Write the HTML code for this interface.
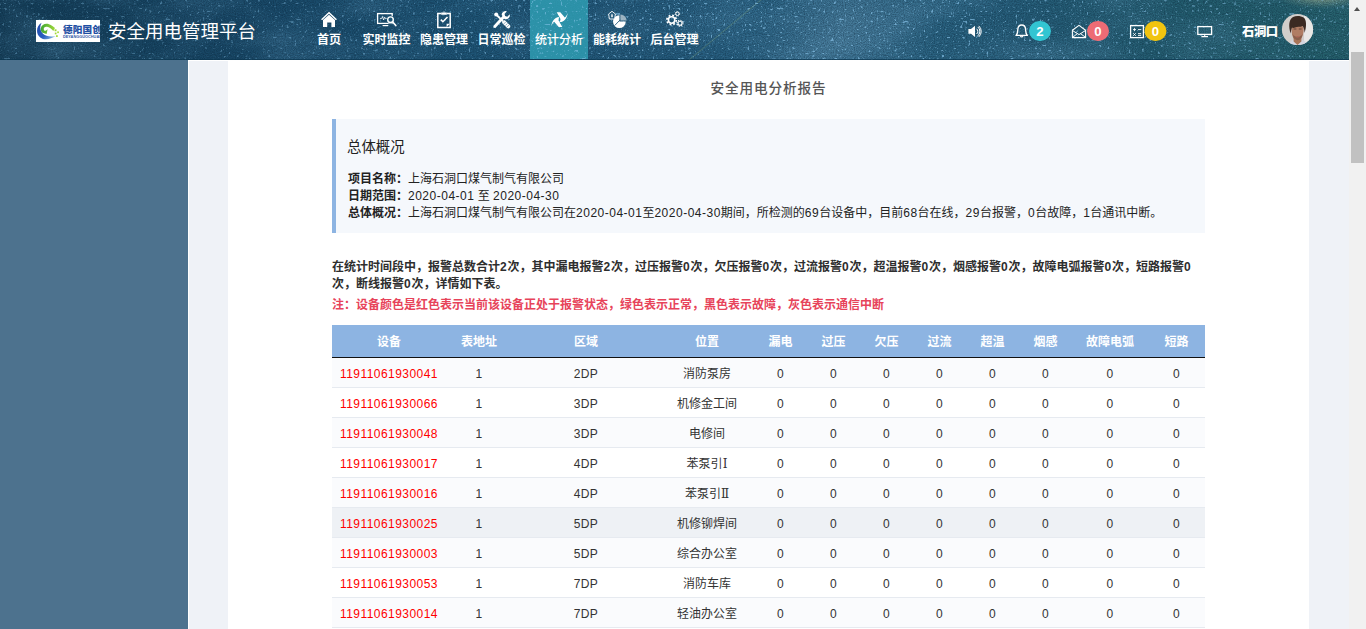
<!DOCTYPE html>
<html lang="zh-CN">
<head>
<meta charset="utf-8">
<title>安全用电管理平台</title>
<style>
*{box-sizing:border-box;margin:0;padding:0}
html,body{width:1366px;height:629px;overflow:hidden;background:#fff}
body{font-family:"Liberation Sans","Noto Sans CJK SC",sans-serif;font-size:12px;color:#222;position:relative}
#hdr{position:absolute;left:0;top:0;width:1349px;height:60px;overflow:hidden;
 background:linear-gradient(90deg,#17455f 0%,#1a4c66 30%,#245c74 55%,#2a6579 75%,#2f6a7c 100%);color:#fff}
#hdr svg.bg{position:absolute;left:0;top:0}
#logo{position:absolute;left:36px;top:20px;width:64px;height:22px;background:#fff;overflow:hidden}
#ttl{position:absolute;left:108px;top:18px;font-size:18.5px;line-height:28px;white-space:nowrap;color:#fff}
.nav{position:absolute;top:0;height:60px;width:58px;text-align:center}
.nav.act span{font-weight:500}
#hdr svg.ic{position:absolute;left:0;top:0}
.nav span{position:absolute;left:-10px;right:-10px;top:32px;font-size:12px;line-height:16px;white-space:nowrap;font-weight:bold}
.nav svg{position:absolute;left:50%;top:10px;margin-left:-10px}
#side{position:absolute;left:0;top:60px;width:188px;height:569px;background:#4d728e}
#main{position:absolute;left:189px;top:61px;width:1160px;height:568px;background:#eff2f7}
#card{position:absolute;left:39px;top:-1px;width:1081px;height:569px;background:#fff}
#sb{position:absolute;left:1349px;top:0;width:17px;height:629px;background:#f1f1f1}
#sb i{position:absolute;left:2px;top:52px;width:13px;height:111px;background:#c1c1c1}
#sb b{position:absolute;left:5px;top:7px;width:0;height:0;border-left:3.5px solid transparent;border-right:3.5px solid transparent;border-bottom:4px solid #505050}
h1{position:absolute;left:0;width:1081px;top:19px;text-align:center;font-size:13.6px;letter-spacing:.9px;line-height:20px;color:#555;font-weight:500}
#sum{position:absolute;left:104px;top:59px;width:873px;height:114px;background:#f5f8fc;border-left:4px solid #8db4e2}
#sum h2{position:absolute;left:11px;top:18px;font-size:14.4px;font-weight:normal;line-height:20px;color:#222}
#sum p{position:absolute;left:12px;font-size:12px;line-height:17px;white-space:nowrap;color:#222}
#para{position:absolute;left:104px;top:199px;width:873px;font-size:12px;line-height:16.5px;font-weight:bold;color:#2e2e2e}
#note{position:absolute;left:104px;top:237px;font-size:12px;line-height:17px;color:#e7435a;font-weight:bold;white-space:nowrap}
table{position:absolute;left:104px;top:265px;width:873px;border-collapse:separate;border-spacing:0;table-layout:fixed}
th{padding-bottom:2px;height:33px;background:#8db4e2;color:#fff;font-size:12px;font-weight:bold;text-align:center;border-bottom:1px solid #111}
td{height:30px;text-align:center;font-size:12px;color:#333;border-bottom:1px solid #e6eaf0;background:#fafbfd}
tr:nth-child(odd) td{background:#fff}
tr.hv td,tr.hv:nth-child(odd) td{background:#eef1f5}
.ro{font-family:"DejaVu Serif",serif;font-style:normal;font-size:12px;line-height:12px}
td{padding-top:3px}
td:nth-child(4){padding-top:0;padding-bottom:1px;letter-spacing:0}
td{letter-spacing:.35px}
td.r{color:#f00;letter-spacing:.45px}
.n{letter-spacing:.5px}
#para .n{letter-spacing:.8px}
</style>
</head>
<body>
<div id="hdr">
 <svg class="bg" width="1349" height="60" viewBox="0 0 1349 60">
  <defs>
   <filter id="stars" x="0" y="0" width="100%" height="100%" color-interpolation-filters="sRGB">
    <feTurbulence type="fractalNoise" baseFrequency="0.38" numOctaves="1" seed="2"/>
    <feColorMatrix type="matrix" values="0 0 0 0 0.55  0 0 0 0 0.78  0 0 0 0 0.93  6 6 0 0 -7.3"/>
    <feGaussianBlur stdDeviation="0.65"/>
   </filter>
   <filter id="stars2" x="0" y="0" width="100%" height="100%" color-interpolation-filters="sRGB">
    <feTurbulence type="fractalNoise" baseFrequency="0.55" numOctaves="1" seed="7"/>
    <feColorMatrix type="matrix" values="0 0 0 0 0.55  0 0 0 0 0.78  0 0 0 0 0.92  4 4 0 0 -4.8"/>
    <feGaussianBlur stdDeviation="0.5"/>
   </filter>
   <filter id="cloud" x="0" y="0" width="100%" height="100%" color-interpolation-filters="sRGB">
    <feTurbulence type="fractalNoise" baseFrequency="0.012 0.03" numOctaves="3" seed="3" result="t"/>
    <feColorMatrix in="t" type="matrix" values="0 0 0 0 0.45  0 0 0 0 0.68  0 0 0 0 0.82  1.6 0 0 0 -0.66"/>
   </filter>
   <filter id="grain" x="0" y="0" width="100%" height="100%" color-interpolation-filters="sRGB">
    <feTurbulence type="fractalNoise" baseFrequency="0.9" numOctaves="1" seed="11" result="t"/>
    <feColorMatrix in="t" type="matrix" values="0 0 0 0 0.03  0 0 0 0 0.12  0 0 0 0 0.2  1.5 0 0 0 -0.55"/>
   </filter>
   <linearGradient id="hg" x1="0" y1="0" x2="1" y2="0">
    <stop offset="0" stop-color="#143d57"/>
    <stop offset="0.2" stop-color="#194968"/>
    <stop offset="0.35" stop-color="#1e5475"/>
    <stop offset="0.5" stop-color="#255b7c"/>
    <stop offset="0.63" stop-color="#2d6686"/>
    <stop offset="0.75" stop-color="#255c78"/>
    <stop offset="0.88" stop-color="#235c6e"/>
    <stop offset="1" stop-color="#25606b"/>
   </linearGradient>
   <linearGradient id="smg" x1="0" y1="0" x2="1" y2="0"><stop offset="0" stop-color="#fff" stop-opacity=".5"/><stop offset=".25" stop-color="#fff" stop-opacity=".6"/><stop offset=".5" stop-color="#fff" stop-opacity=".95"/><stop offset=".7" stop-color="#fff" stop-opacity="1"/><stop offset="1" stop-color="#fff" stop-opacity=".65"/></linearGradient>
   <mask id="sm" maskUnits="userSpaceOnUse" x="0" y="0" width="1349" height="60"><rect width="1349" height="60" fill="url(#smg)"/></mask>
   <radialGradient id="mw" cx="0.5" cy="0.5" r="0.5"><stop offset="0" stop-color="#5a8aa8" stop-opacity=".55"/><stop offset="1" stop-color="#5a8aa8" stop-opacity="0"/></radialGradient>
   <radialGradient id="gl" cx="0.5" cy="0.5" r="0.5"><stop offset="0" stop-color="#b8c09a" stop-opacity=".75"/><stop offset="1" stop-color="#7fa090" stop-opacity="0"/></radialGradient>
  </defs>
  <rect width="1349" height="60" fill="url(#hg)"/>
  <rect width="1349" height="60" filter="url(#cloud)" opacity=".3"/>
  <ellipse cx="845" cy="28" rx="110" ry="70" fill="url(#mw)" transform="rotate(-25 845 28)"/>
  <ellipse cx="1322" cy="-3" rx="45" ry="12" fill="url(#gl)"/>
  <path d="M688,61 L762,-1" stroke="#6f9a86" stroke-width="1.2" opacity=".45"/>
  <rect width="1349" height="60" filter="url(#grain)" opacity=".6"/>
  <rect x="530" y="0" width="58" height="59" fill="#2fa0b4" opacity=".82"/>
  <g mask="url(#sm)"><rect width="1349" height="60" filter="url(#stars2)" opacity=".55"/>
  <rect width="1349" height="60" filter="url(#stars)" opacity=".66"/></g>
  <rect x="0" y="59" width="1349" height="1" fill="#0c3650" opacity=".7"/>
 </svg>
 <div id="logo"><svg width="64" height="22" viewBox="0 0 64 22">
  <defs><linearGradient id="lb" x1="0" y1="0" x2="1" y2="1"><stop offset="0" stop-color="#2147a8"/><stop offset=".6" stop-color="#2a5fc0"/><stop offset="1" stop-color="#9fd0f0"/></linearGradient>
  <linearGradient id="lg" x1="0" y1="0" x2="1" y2="0"><stop offset="0" stop-color="#3fa535"/><stop offset="1" stop-color="#9fd83a"/></linearGradient></defs>
  <path d="M5.6,2.8 C0,6 -0.4,13.8 4.2,17.4 C8.4,20.6 14.8,19.2 19.8,16 C14.8,17.2 10,16.6 7,13.8 C3.8,10.8 3.6,6.4 5.6,2.8 Z" fill="url(#lb)"/>
  <path d="M4.8,8.2 C5.5,4.5 9.5,3 13,4.2 C15.5,5 17.5,6.5 19,8 L17.3,11 C15.5,9 13.5,7.2 11,6.8 C8.8,6.5 7.6,7.6 7.8,9.4 C8,10.8 9.2,11.2 10,10.4 L11.6,9.2 L10.6,14 L6.5,12.8 C5.2,11.8 4.5,10 4.8,8.2 Z" fill="url(#lg)"/>
  <rect x="18.6" y="9.3" width="1.9" height="1.9" fill="#9fd83a"/><rect x="21.2" y="11.4" width="1.7" height="1.7" fill="#a8dc3e"/><rect x="18.8" y="12.6" width="1.7" height="1.7" fill="#9fd83a"/><rect x="20" y="15.2" width="1.8" height="1.8" fill="#a8dc3e"/>
  <text x="27" y="12.6" font-family="'Liberation Sans','Noto Sans CJK SC',sans-serif" font-size="9.6" font-weight="900" fill="#1f4fa3" textLength="38.8" lengthAdjust="spacing">德阳国创</text>
  <text x="27" y="17.6" font-family="'Liberation Sans',sans-serif" font-size="3.4" font-weight="bold" fill="#2a55a5" textLength="42" lengthAdjust="spacingAndGlyphs">DEYANGGUOCHUANG</text>
 </svg></div>
 <div id="ttl">安全用电管理平台</div>
 <div class="nav" style="left:300px"><span>首页</span></div>
 <div class="nav" style="left:357.5px"><span>实时监控</span></div>
 <div class="nav" style="left:415px"><span>隐患管理</span></div>
 <div class="nav" style="left:472.5px"><span>日常巡检</span></div>
 <div class="nav act" style="left:530px"><span>统计分析</span></div>
 <div class="nav" style="left:588px"><span>能耗统计</span></div>
 <div class="nav" style="left:645.5px"><span>后台管理</span></div>
 <svg class="ic" width="1349" height="60" viewBox="0 0 1349 60" fill="none" stroke="none">
  <!-- home -->
  <path d="M321.6,19.7 L329,12.7 L336.4,19.7" stroke="#fff" stroke-width="1.5"/>
  <path d="M323,20 L329,14.7 L335,20 L335,27 L331.4,27 L331.4,22.4 L327.2,22.4 L327.2,27 L323,27 Z" fill="#fff"/>
  <!-- monitor + magnifier -->
  <rect x="377.6" y="13.6" width="14.6" height="9.8" stroke="#fff" stroke-width="1.3"/>
  <path d="M382.6,25.6 H388.2" stroke="#fff" stroke-width="1.2"/>
  <path d="M380,18.4 H381.8 L382.6,16.6 L383.6,20 L384.6,17.2 L385.2,18.4 H387" stroke="#fff" stroke-width=".8"/>
  <circle cx="390.5" cy="19.7" r="4" fill="#1f5676"/>
  <circle cx="390.5" cy="19.7" r="2.8" stroke="#fff" stroke-width="1.4"/>
  <path d="M392.7,22 L395.8,25.5" stroke="#fff" stroke-width="1.7" stroke-linecap="round"/>
  <!-- clipboard -->
  <path d="M441.2,13.4 H437.8 V27.4 H450.2 V13.4 H446.8" stroke="#fff" stroke-width="1.5"/>
  <path d="M441.2,14.8 V12.4 H442.8 A1.3,1.3 0 0 1 445.2,12.4 H446.8 V14.8 Z" fill="#fff"/>
  <circle cx="444" cy="12.3" r=".55" fill="#1f5676"/>
  <path d="M440.8,19.6 L442.9,21.7 L447.5,17" stroke="#fff" stroke-width="1.6"/>
  <path d="M446.6,27 V23.8 H450 Z" fill="#fff"/>
  <!-- wrench + screwdriver -->
  <path d="M494.8,26.4 L503.6,17" stroke="#fff" stroke-width="2.9" stroke-linecap="round"/>
  <path d="M501.6,14.8 A4,4 0 0 1 506.9,11.3 L504.5,13.9 L505.1,16.1 L507.3,16.7 L509.7,14.2 A4,4 0 0 1 504.4,19 Z" fill="#fff"/>
  <circle cx="496.2" cy="14.6" r="2" fill="#fff"/>
  <path d="M496.4,14.8 L503.4,21.6" stroke="#fff" stroke-width="1.9"/>
  <path d="M501.9,22.7 L504.7,19.9 L509.7,24.9 A1.98,1.98 0 0 1 506.9,27.7 Z" fill="#fff"/>
  <path d="M503.7,24 L506,21.7 M505.3,25.6 L507.6,23.3 M506.8,27.1 L509.1,24.8" stroke="#3a6a88" stroke-width=".55"/>
  <!-- pinwheel -->
  <path d="M556.7,12.2 L560.3,12.2 L564.8,17.4 C566.1,16.4 567.1,14.8 567.8,12.9 C566.8,18.8 563.8,21.7 560,22.1 C560.1,21 560.3,20 560.5,19 Z" fill="#fff"/>
  <path d="M562.3,27 L558.7,27 L554.2,21.8 C552.9,22.8 551.9,24.4 551.2,26.3 C552.2,20.4 555.2,17.5 559,17.1 C558.9,18.2 558.7,19.2 558.5,20.2 Z" fill="#fff"/>
  <!-- pie + house -->
  <path d="M619.4,21.6 L619.4,15.2 A6.4,6.4 0 1 0 625.8,21.6 Z" fill="#fff"/>
  <path d="M620.4,20.6 L620.4,14.4 A6.4,6.4 0 0 1 626.6,20.6 Z" fill="#fff" opacity=".55"/>
  <path d="M614.6,25.6 L620.2,19.8" stroke="#2a5f80" stroke-width=".9"/>
  <path d="M612,11.3 L615.4,14 L614.6,19 H609.4 L608.6,14 Z" fill="#245a7b" stroke="#fff" stroke-width=".9"/>
  <path d="M612,13.4 C613.4,15 613.4,17.2 612,17.4 C610.6,17.2 610.6,15 612,13.4 Z" fill="#fff" opacity=".8"/>
  <!-- gears -->
  <g stroke="#fff">
   <circle cx="671.6" cy="20" r="3.2" stroke-width="1.6"/>
   <circle cx="671.6" cy="20" r="4.7" stroke-width="1.7" stroke-dasharray="1.85 1.84"/>
   <circle cx="677.4" cy="13.8" r="1.7" stroke-width="1"/>
   <circle cx="677.4" cy="13.8" r="2.3" stroke-width=".8" stroke-dasharray=".9 .9"/>
   <circle cx="680" cy="23.2" r="2" stroke-width="1.1"/>
   <circle cx="680" cy="23.2" r="3" stroke-width="1.1" stroke-dasharray="1.18 1.18"/>
  </g>
  <!-- speaker -->
  <path d="M968.4,29 H971 L975,25.8 V37 L971,33.8 H968.4 Z" fill="#fff"/>
  <path d="M976.6,28.8 A3.4,3.4 0 0 1 976.6,34 M977.8,27 A5.6,5.6 0 0 1 977.8,35.8 M978.8,25.9 A7.4,7.4 0 0 1 978.8,36.9" stroke="#fff" stroke-width="1"/>
  <!-- bell -->
  <path d="M1016,35.4 C1018,33.6 1017.6,31.4 1017.8,29.4 C1018,26.6 1019.6,25 1021.7,25 C1023.8,25 1025.4,26.6 1025.6,29.4 C1025.8,31.4 1025.4,33.6 1027.4,35.4 Z" stroke="#fff" stroke-width="1.35" stroke-linejoin="round"/>
  <path d="M1020.4,36 A1.4,1.4 0 0 0 1023,36" stroke="#fff" stroke-width="1.1"/>
  <rect x="1029" y="21" width="22" height="20" rx="10.5" fill="#32c5d2"/>
  <!-- envelope open -->
  <path d="M1072.4,30.2 L1079,25.4 L1085.6,30.2 V37.6 H1072.4 Z" stroke="#fff" stroke-width="1.1" stroke-linejoin="round"/>
  <path d="M1072.6,30.6 L1079,34.6 L1085.4,30.6 M1072.8,37.2 L1077.4,33.6 M1085.2,37.2 L1080.6,33.6" stroke="#fff" stroke-width="1"/>
  <rect x="1087" y="21" width="22" height="20" rx="10.5" fill="#ed6b75"/>
  <!-- calculator -->
  <rect x="1130.6" y="25.6" width="12.8" height="12" stroke="#fff" stroke-width="1.3"/>
  <path d="M1133,29.6 H1136 M1134.5,28.1 V31.1 M1138,29.6 H1141.2 M1133.2,33.2 L1135.8,35.8 M1135.8,33.2 L1133.2,35.8 M1138,33.6 H1141.2 M1138,35.4 H1141.2" stroke="#fff" stroke-width=".9"/>
  <rect x="1144.5" y="21" width="22" height="20" rx="10.5" fill="#f1c40f"/>
  <!-- monitor -->
  <rect x="1197.8" y="26.6" width="13.8" height="7.8" stroke="#fff" stroke-width="1.3"/>
  <path d="M1204.7,34.4 V36.4 M1201.4,36.6 H1208" stroke="#fff" stroke-width="1.1"/>
  <g font-family="'Liberation Sans',sans-serif" font-size="13.2" font-weight="bold" fill="#fff" text-anchor="middle">
   <text x="1040" y="35.7">2</text><text x="1098" y="35.7">0</text><text x="1155.5" y="35.7">0</text>
  </g>
  <text x="1242" y="36.2" font-family="'Liberation Sans','Noto Sans CJK SC',sans-serif" font-size="12.4" font-weight="900" fill="#fff" letter-spacing="-.5">石洞口</text>
  <!-- avatar -->
  <defs><clipPath id="av"><circle cx="1297.5" cy="29.5" r="15.6"/></clipPath>
  <filter id="avb" x="-10%" y="-10%" width="120%" height="120%"><feGaussianBlur stdDeviation=".55"/></filter></defs>
  <g clip-path="url(#av)">
   <rect x="1280" y="12" width="36" height="36" fill="#d2cecb"/>
   <rect x="1304" y="12" width="14" height="36" fill="#e9e7e5"/>
   <g filter="url(#avb)">
    <path d="M1288,48 C1288.6,42.6 1291.6,40.4 1294,39.6 L1301,39.6 C1304.6,40.6 1307.6,42.6 1308.6,48 Z" fill="#d5d6e0"/>
    <path d="M1293.6,37 H1301.4 V41.4 L1297.5,45 L1293.6,41.4 Z" fill="#a87458"/>
    <path d="M1291.6,28 C1291.6,24 1303.6,24 1303.6,28 C1303.8,33 1302.6,37.6 1300.4,39.4 C1298.6,40.6 1296.4,40.6 1294.6,39.4 C1292.4,37.6 1291.4,33 1291.6,28 Z" fill="#b07c64"/>
    <path d="M1292.6,34 C1293.2,38.6 1295,40.2 1297.5,40.2 C1300,40.2 1301.8,38.6 1302.6,34 C1301.4,36 1299.8,36.6 1297.5,36.6 C1295.2,36.6 1293.6,36 1292.6,34 Z" fill="#7e5543" opacity=".75"/>
    <path d="M1295.6,36.4 C1296.8,37.2 1298.4,37.2 1299.6,36.4" stroke="#c0685e" stroke-width=".8" fill="none"/>
    <path d="M1293.6,29 H1296.4 M1298.8,29 H1301.6" stroke="#4a3428" stroke-width=".9" opacity=".8"/>
    <path d="M1290.6,33.4 C1288.6,27 1288.4,19.6 1293,17 C1296,15.4 1301,15.6 1303.6,17.6 C1306.8,20 1306.6,27 1304.6,33 C1304.4,29.6 1303.8,27.6 1302.6,26 C1300,27.4 1297,26.4 1295,27.6 C1293.6,28.4 1292.6,28 1292,27.6 C1291.4,29.4 1291,31 1290.6,33.4 Z" fill="#3b2a22"/>
   </g>
  </g>
 </svg>
</div>
<div id="side"></div>
<div id="main">
 <div id="card">
  <h1>安全用电分析报告</h1>
  <div id="sum">
   <h2>总体概况</h2>
   <p style="top:52px"><b>项目名称：</b>上海石洞口煤气制气有限公司</p>
   <p style="top:69px"><b>日期范围：</b><span class="n">2020-04-01</span> 至 <span class="n">2020-04-30</span></p>
   <p style="top:86px"><b>总体概况：</b>上海石洞口煤气制气有限公司在<span class="n">2020-04-01</span>至<span class="n">2020-04-30</span>期间，所检测的<span class="n">69</span>台设备中，目前<span class="n">68</span>台在线，<span class="n">29</span>台报警，<span class="n">0</span>台故障，<span class="n">1</span>台通讯中断。</p>
  </div>
  <div id="para">在统计时间段中，报警总数合计<span class="n">2</span>次，其中漏电报警<span class="n">2</span>次，过压报警<span class="n">0</span>次，欠压报警<span class="n">0</span>次，过流报警<span class="n">0</span>次，超温报警<span class="n">0</span>次，烟感报警<span class="n">0</span>次，故障电弧报警<span class="n">0</span>次，短路报警<span class="n">0</span>次，断线报警<span class="n">0</span>次，详情如下表。</div>
  <div id="note">注：设备颜色是红色表示当前该设备正处于报警状态，绿色表示正常，黑色表示故障，灰色表示通信中断</div>
  <table>
   <colgroup><col style="width:114px"><col style="width:66px"><col style="width:148px"><col style="width:94px"><col style="width:53px"><col style="width:53px"><col style="width:53px"><col style="width:53px"><col style="width:53px"><col style="width:53px"><col style="width:76px"><col style="width:57px"></colgroup>
   <tr><th>设备</th><th>表地址</th><th>区域</th><th>位置</th><th>漏电</th><th>过压</th><th>欠压</th><th>过流</th><th>超温</th><th>烟感</th><th>故障电弧</th><th>短路</th></tr>
   <tr><td class="r">11911061930041</td><td>1</td><td>2DP</td><td>消防泵房</td><td>0</td><td>0</td><td>0</td><td>0</td><td>0</td><td>0</td><td>0</td><td>0</td></tr>
   <tr><td class="r">11911061930066</td><td>1</td><td>3DP</td><td>机修金工间</td><td>0</td><td>0</td><td>0</td><td>0</td><td>0</td><td>0</td><td>0</td><td>0</td></tr>
   <tr><td class="r">11911061930048</td><td>1</td><td>3DP</td><td>电修间</td><td>0</td><td>0</td><td>0</td><td>0</td><td>0</td><td>0</td><td>0</td><td>0</td></tr>
   <tr><td class="r">11911061930017</td><td>1</td><td>4DP</td><td>苯泵引<i class="ro">Ⅰ</i></td><td>0</td><td>0</td><td>0</td><td>0</td><td>0</td><td>0</td><td>0</td><td>0</td></tr>
   <tr><td class="r">11911061930016</td><td>1</td><td>4DP</td><td>苯泵引<i class="ro">Ⅱ</i></td><td>0</td><td>0</td><td>0</td><td>0</td><td>0</td><td>0</td><td>0</td><td>0</td></tr>
   <tr class="hv"><td class="r">11911061930025</td><td>1</td><td>5DP</td><td>机修铆焊间</td><td>0</td><td>0</td><td>0</td><td>0</td><td>0</td><td>0</td><td>0</td><td>0</td></tr>
   <tr><td class="r">11911061930003</td><td>1</td><td>5DP</td><td>综合办公室</td><td>0</td><td>0</td><td>0</td><td>0</td><td>0</td><td>0</td><td>0</td><td>0</td></tr>
   <tr><td class="r">11911061930053</td><td>1</td><td>7DP</td><td>消防车库</td><td>0</td><td>0</td><td>0</td><td>0</td><td>0</td><td>0</td><td>0</td><td>0</td></tr>
   <tr><td class="r">11911061930014</td><td>1</td><td>7DP</td><td>轻油办公室</td><td>0</td><td>0</td><td>0</td><td>0</td><td>0</td><td>0</td><td>0</td><td>0</td></tr>
   <tr><td class="r">11911061930026</td><td>1</td><td>7DP</td><td>轻油泵房</td><td>0</td><td>0</td><td>0</td><td>0</td><td>0</td><td>0</td><td>0</td><td>0</td></tr>
  </table>
 </div>
</div>
<div id="sb"><b></b><i></i></div>
</body>
</html>
